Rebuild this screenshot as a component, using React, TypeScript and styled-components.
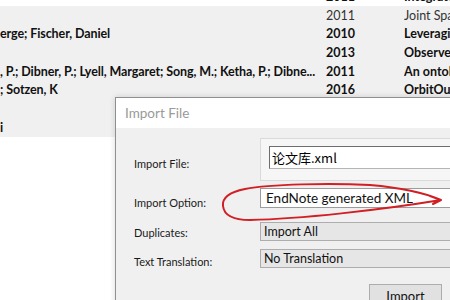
import styled, { createGlobalStyle } from "styled-components";

const GlobalStyle = createGlobalStyle`
    html, body {
        margin: 0;
        padding: 0;
        background: #ffffff;
    }
`;

interface Ref {
    author: string;
    year: string;
    title: string;
    bold: boolean;
    selected: boolean;
}

const refs: Ref[] = [
    { author: "", year: "2011", title: "Integrated", bold: true, selected: false },
    { author: "", year: "2011", title: "Joint Space", bold: false, selected: true },
    { author: "erge; Fischer, Daniel", year: "2010", title: "Leveraging", bold: true, selected: true },
    { author: "", year: "2013", title: "Observed", bold: true, selected: true },
    {
        author: ", P.; Dibner, P.; Lyell, Margaret; Song, M.; Ketha, P.; Dibne...",
        year: "2011",
        title: "An ontology",
        bold: true,
        selected: true,
    },
    { author: "; Sotzen, K", year: "2016", title: "OrbitOutlook", bold: true, selected: true },
    { author: "", year: "", title: "", bold: true, selected: true },
    { author: "i", year: "", title: "", bold: true, selected: true },
];

const fields = [
    { label: "Duplicates:", value: "Import All", height: 27, offset: 3 },
    { label: "Text Translation:", value: "No Translation", height: 19, offset: 5 },
];

export default function App() {
    return (
        <Screen>
            <GlobalStyle />
            <RefList>
                {refs.map((r, i) => (
                    <RefRow key={i} $bold={r.bold} $selected={r.selected}>
                        <AuthorCell>{r.author}</AuthorCell>
                        <YearCell>{r.year}</YearCell>
                        <TitleCell>{r.title}</TitleCell>
                    </RefRow>
                ))}
            </RefList>

            <Dialog>
                <TitleBar>Import File</TitleBar>
                <DialogBody>
                    <FormRow $height={50}>
                        <Label $offset={18}>Import File:</Label>
                        <FilePanel>
                            <FileInput>论文库.xml</FileInput>
                        </FilePanel>
                    </FormRow>
                    <FormRow $height={34}>
                        <Label $offset={7}>Import Option:</Label>
                        <OptionBox>EndNote generated XML</OptionBox>
                    </FormRow>
                    {fields.map((f) => (
                        <FormRow key={f.label} $height={f.height}>
                            <Label $offset={f.offset}>{f.label}</Label>
                            <SelectBox>{f.value}</SelectBox>
                        </FormRow>
                    ))}
                    <ButtonRow>
                        <ImportButton>Import</ImportButton>
                    </ButtonRow>
                </DialogBody>
            </Dialog>

            <Scribble viewBox="0 0 450 300" width="450" height="300">
                <path
                    d="M 441 200 C 425 193, 405 188, 370 185 C 330 183, 270 184, 245 189 C 230 192, 222 198, 223 206 C 224 215, 232 220, 250 220 C 300 219, 380 210, 441 200 M 430 196 L 441 200 L 433 204"
                    fill="none"
                    stroke="#d11f24"
                    strokeWidth="2"
                    strokeLinecap="round"
                    strokeLinejoin="round"
                />
            </Scribble>
        </Screen>
    );
}

const Screen = styled.div`
    position: relative;
    width: 450px;
    height: 300px;
    overflow: hidden;
    background: #ffffff;
    font-family: Lato, "Open Sans", "Liberation Sans", sans-serif;
    color: #111;
`;

const RefList = styled.div`
    display: flex;
    flex-direction: column;
    margin-top: -13px;
`;

const RefRow = styled.div<{ $bold: boolean; $selected: boolean }>`
    display: flex;
    align-items: center;
    height: 18.7px;
    font-size: 12.5px;
    font-weight: ${({ $bold }) => ($bold ? 700 : 400)};
    color: ${({ $bold }) => ($bold ? "#111" : "#333")};
    background: ${({ $selected }) => ($selected ? "#f0f0f0" : "#ffffff")};
    white-space: nowrap;
`;

const AuthorCell = styled.div`
    width: 326px;
    overflow: hidden;
    letter-spacing: -0.1px;
`;

const YearCell = styled.div`
    width: 78px;
`;

const TitleCell = styled.div`
    flex: 1;
    overflow: hidden;
`;

const Dialog = styled.div`
    position: absolute;
    left: 115px;
    top: 97px;
    width: 360px;
    height: 220px;
    border: 1px solid #8f8f8f;
    background: #f0f0f0;
    display: flex;
    flex-direction: column;
    box-shadow: 0 0 6px rgba(0, 0, 0, 0.15);
`;

const TitleBar = styled.div`
    height: 30px;
    display: flex;
    align-items: center;
    padding-left: 9px;
    background: #ffffff;
    color: #9a9a9a;
    font-size: 13.5px;
`;

const DialogBody = styled.div`
    display: flex;
    flex-direction: column;
    padding: 10px 0 0 18px;
`;

const FormRow = styled.div<{ $height: number }>`
    display: grid;
    grid-template-columns: 126px 1fr;
    align-items: start;
    height: ${({ $height }) => $height}px;
`;

const Label = styled.div<{ $offset: number }>`
    margin-top: ${({ $offset }) => $offset}px;
    font-size: 11px;
    line-height: 16px;
    color: #1a1a1a;
`;

const FilePanel = styled.div`
    height: 43px;
    box-sizing: border-box;
    padding: 7px 0 0 8px;
    border: 1px solid #dadada;
    border-right: none;
    background: #f6f6f6;
`;

const FileInput = styled.div`
    height: 23px;
    box-sizing: border-box;
    display: flex;
    align-items: center;
    padding-left: 2px;
    background: #ffffff;
    border: 1px solid #b5b5b5;
    border-left-color: #6e6e6e;
    border-top-color: #6e6e6e;
    border-right: none;
    font-family: "Noto Sans CJK SC", sans-serif;
    font-size: 13px;
    color: #000;
`;

const OptionBox = styled.div`
    height: 20px;
    box-sizing: border-box;
    display: flex;
    align-items: center;
    padding-left: 5px;
    background: #ffffff;
    border: 1px solid #9c9c9c;
    border-right: none;
    font-size: 13.5px;
    color: #111;
`;

const SelectBox = styled.div`
    height: 19px;
    box-sizing: border-box;
    display: flex;
    align-items: center;
    padding-left: 3px;
    background: #e6e6e6;
    border: 1px solid #adadad;
    border-right: none;
    font-size: 12.5px;
    color: #111;
`;

const ButtonRow = styled.div`
    display: flex;
    padding: 16px 0 0 235px;
`;

const ImportButton = styled.div`
    width: 73px;
    height: 24px;
    box-sizing: border-box;
    display: flex;
    align-items: center;
    justify-content: center;
    background: #e1e1e1;
    border: 1px solid #adadad;
    font-size: 13px;
    color: #111;
`;

const Scribble = styled.svg`
    position: absolute;
    left: 0;
    top: 0;
    pointer-events: none;
`;
